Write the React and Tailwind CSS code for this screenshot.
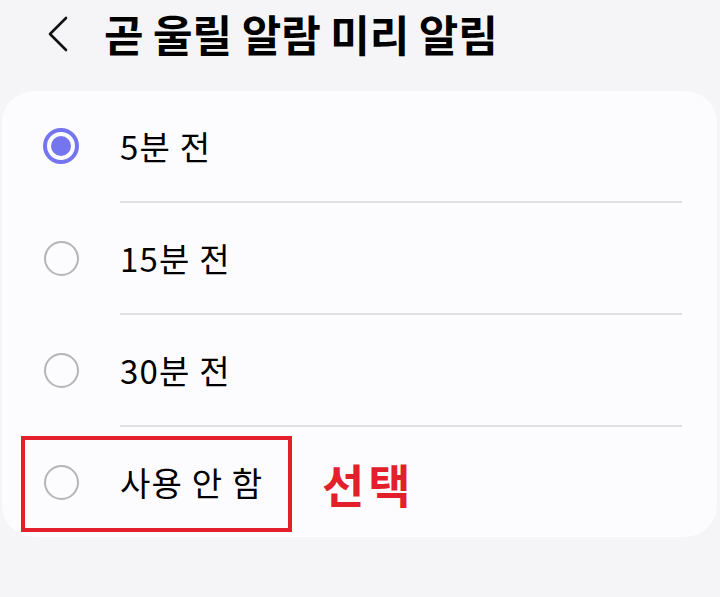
import { useState } from 'react'

const options = ['5분 전', '15분 전', '30분 전', '사용 안 함']

function Radio({ checked }) {
  return checked ? (
    <span className="flex h-[36px] w-[36px] items-center justify-center rounded-full border-[4px] border-[#7575f0]">
      <span className="h-[20px] w-[20px] rounded-full bg-[#7575f0]" />
    </span>
  ) : (
    <span className="h-[35px] w-[35px] rounded-full border-[2.5px] border-[#b5b5b5]" />
  )
}

export default function App() {
  const [selected, setSelected] = useState(0)

  return (
    <div
      className="h-[597px] w-[720px] overflow-hidden bg-[#f5f5f7] text-black"
      style={{ fontFamily: '"Noto Sans CJK KR", "Noto Sans", sans-serif' }}
    >
      <header className="flex h-[91px] items-center pb-[24px]">
        <button type="button" className="ml-[47px] flex h-[40px] w-[24px] items-center">
          <svg width="22" height="36" viewBox="0 0 22 36" fill="none">
            <path d="M19 2 L3 18 L19 34" stroke="#111" strokeWidth="2.6" strokeLinecap="round" strokeLinejoin="round" />
          </svg>
        </button>
        <h1 className="ml-[33px] text-[43px] font-bold leading-none tracking-[-0.1px]">곧 울릴 알람 미리 알림</h1>
      </header>

      <section className="ml-[2px] w-[715px] rounded-[32px] bg-[#fcfcfe]">
        {options.map((label, i) => (
          <div key={label}>
            {i > 0 ? <div className="ml-[118px] mr-[35px] h-[2px] bg-[#e0e0e3]" /> : null}
            <div
              className="relative flex h-[110px] cursor-pointer items-center"
              onClick={() => setSelected(i)}
            >
              <div className="flex w-[118px] justify-center pr-[0px]">
                <Radio checked={selected === i} />
              </div>
              <span className="text-[33px] leading-none tracking-[1.2px]">{label}</span>
              {i === options.length - 1 ? (
                <>
                  <div className="absolute left-[19px] top-[9px] h-[96px] w-[271px] border-[4.5px] border-[#e21f2b]" />
                  <span className="absolute left-[320px] top-[33px] text-[46px] font-bold leading-none tracking-[4px] text-[#e21f2b]">
                    선택
                  </span>
                </>
              ) : null}
            </div>
          </div>
        ))}
      </section>
    </div>
  )
}
